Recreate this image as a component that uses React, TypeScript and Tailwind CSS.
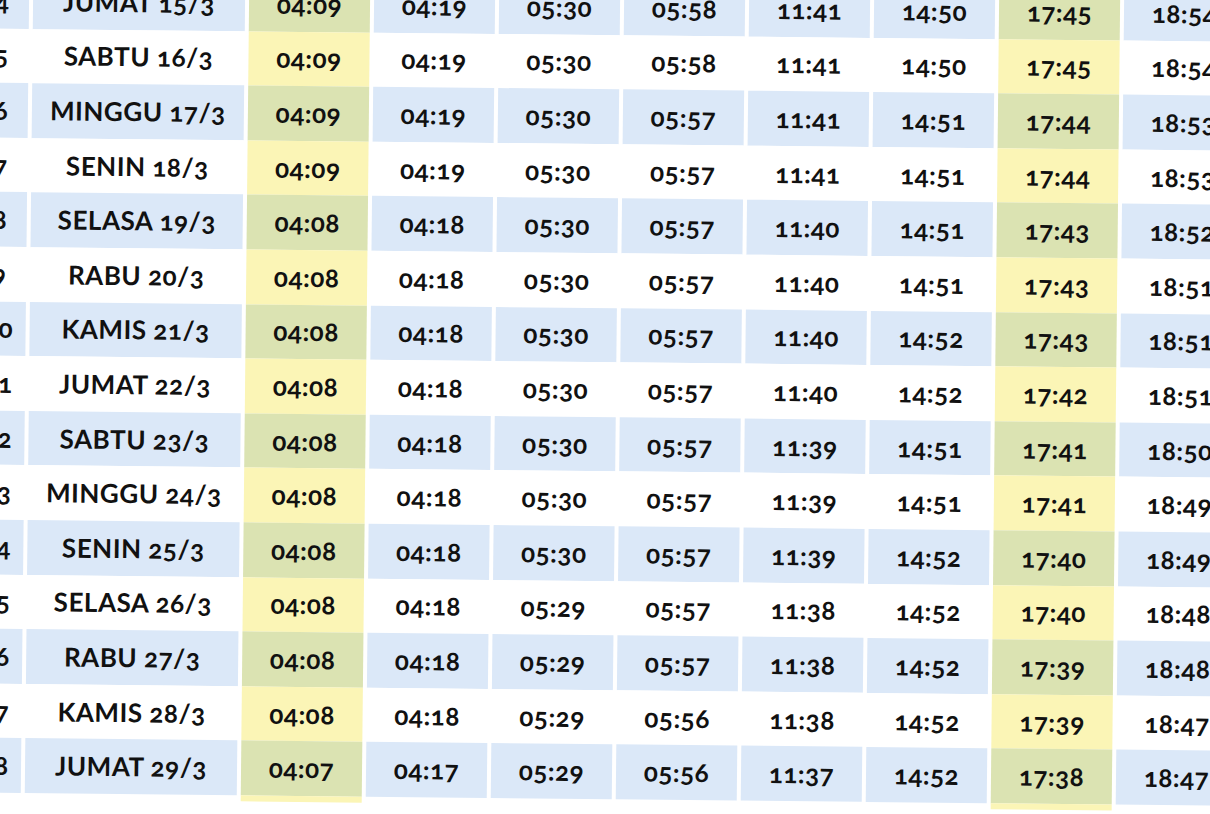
import React from 'react';

type Row = { no: number; day: string; times: string[] };

const rows: Row[] = [
  { no: 4, day: 'JUMAT 15/3', times: ['04:09', '04:19', '05:30', '05:58', '11:41', '14:50', '17:45', '18:54'] },
  { no: 5, day: 'SABTU 16/3', times: ['04:09', '04:19', '05:30', '05:58', '11:41', '14:50', '17:45', '18:54'] },
  { no: 6, day: 'MINGGU 17/3', times: ['04:09', '04:19', '05:30', '05:57', '11:41', '14:51', '17:44', '18:53'] },
  { no: 7, day: 'SENIN 18/3', times: ['04:09', '04:19', '05:30', '05:57', '11:41', '14:51', '17:44', '18:53'] },
  { no: 8, day: 'SELASA 19/3', times: ['04:08', '04:18', '05:30', '05:57', '11:40', '14:51', '17:43', '18:52'] },
  { no: 9, day: 'RABU 20/3', times: ['04:08', '04:18', '05:30', '05:57', '11:40', '14:51', '17:43', '18:51'] },
  { no: 10, day: 'KAMIS 21/3', times: ['04:08', '04:18', '05:30', '05:57', '11:40', '14:52', '17:43', '18:51'] },
  { no: 11, day: 'JUMAT 22/3', times: ['04:08', '04:18', '05:30', '05:57', '11:40', '14:52', '17:42', '18:51'] },
  { no: 12, day: 'SABTU 23/3', times: ['04:08', '04:18', '05:30', '05:57', '11:39', '14:51', '17:41', '18:50'] },
  { no: 13, day: 'MINGGU 24/3', times: ['04:08', '04:18', '05:30', '05:57', '11:39', '14:51', '17:41', '18:49'] },
  { no: 14, day: 'SENIN 25/3', times: ['04:08', '04:18', '05:30', '05:57', '11:39', '14:52', '17:40', '18:49'] },
  { no: 15, day: 'SELASA 26/3', times: ['04:08', '04:18', '05:29', '05:57', '11:38', '14:52', '17:40', '18:48'] },
  { no: 16, day: 'RABU 27/3', times: ['04:08', '04:18', '05:29', '05:57', '11:38', '14:52', '17:39', '18:48'] },
  { no: 17, day: 'KAMIS 28/3', times: ['04:08', '04:18', '05:29', '05:56', '11:38', '14:52', '17:39', '18:47'] },
  { no: 18, day: 'JUMAT 29/3', times: ['04:07', '04:17', '05:29', '05:56', '11:37', '14:52', '17:38', '18:47'] },
];

// imsak and maghrib columns are highlighted
const highlighted = [0, 6];

function cellBg(blue: boolean, col: number) {
  if (highlighted.includes(col)) return blue ? 'bg-[#dbe3b2]' : 'bg-[#fbf5b6]';
  return blue ? 'bg-[#dbe8f8]' : 'bg-white';
}

export default function App() {
  return (
    <div className="w-[1210px] h-[814px] overflow-hidden bg-white">
      <div className="rotate-[0.6deg] origin-center -mt-[20px] -ml-[29px] font-['Lato','Open_Sans',sans-serif] font-bold text-[#111] oldstyle-nums tracking-[0.02em] text-[26px]">
        <div className="grid grid-cols-[54px_212px_repeat(8,121px)] gap-x-1">
          {rows.map((r, i) => {
            const blue = i % 2 === 0;
            return (
              <React.Fragment key={r.day}>
                <div className={`h-[54.6px] flex items-center justify-center ${blue ? 'bg-[#dbe8f8]' : 'bg-white'}`}>
                  {r.no}
                </div>
                <div className={`h-[54.6px] flex items-center justify-center ${blue ? 'bg-[#dbe8f8]' : 'bg-white'}`}>
                  {r.day}
                </div>
                {r.times.map((t, c) => (
                  <div key={c} className={`h-[54.6px] flex items-center justify-center ${cellBg(blue, c)}`}>
                    {t}
                  </div>
                ))}
              </React.Fragment>
            );
          })}
          {/* yellow columns run a little past the last row */}
          <div className="h-[6px]" />
          <div className="h-[6px]" />
          {Array.from({ length: 8 }).map((_, c) => (
            <div key={c} className={`h-[6px] ${highlighted.includes(c) ? 'bg-[#fbf5b6]' : ''}`} />
          ))}
        </div>
      </div>
    </div>
  );
}
